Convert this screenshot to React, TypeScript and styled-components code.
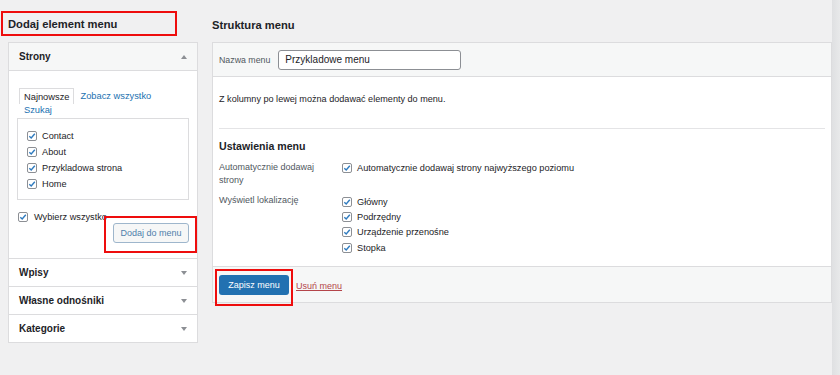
import React from 'react'
import styled, { createGlobalStyle } from 'styled-components'

const GlobalStyle = createGlobalStyle`
  html, body {
    margin: 0;
    padding: 0;
    background: #f0f0f1;
    font-family: "Liberation Sans", Arial, sans-serif;
    color: #1d2327;
  }
  * { box-sizing: border-box; }
`

const Root = styled.div`
  display: flex;
  width: 840px;
  height: 375px;
  overflow: hidden;
`
const Page = styled.div`
  flex: 1;
  display: grid;
  grid-template-columns: 190px 620px;
  column-gap: 14px;
  align-items: start;
  padding: 11px 0 0 8px;
`
const ScrollStrip = styled.div`
  width: 8px;
  background: linear-gradient(90deg, #dfe0e2, #e8e9ea);
`
const Column = styled.div`
  display: flex;
  flex-direction: column;
`
const Marked = styled.div`
  border: 2px solid #ee0d0d;
  position: relative;
  z-index: 1;
`
const LeftTitle = styled(Marked)`
  margin-left: -7px;
  width: 176px;
  height: 25px;
  padding-left: 5px;
  display: flex;
  align-items: center;
  font-size: 11.2px;
  font-weight: 700;
  margin-bottom: 6px;
`
const RightTitle = styled.h2`
  margin: 0 0 6px;
  height: 25px;
  padding-top: 8px;
  font-size: 11.2px;
  font-weight: 700;
`
const Accordion = styled.div`
  background: #fff;
  border: 1px solid #dcdcde;
`
const SectionHead = styled.div<{ $open?: boolean }>`
  height: 28px;
  display: flex;
  align-items: center;
  justify-content: space-between;
  padding: 0 10px 0 10px;
  font-size: 10px;
  font-weight: 700;
  background: ${p => (p.$open ? '#f6f7f7' : '#fff')};
  border-bottom: ${p => (p.$open ? '1px solid #dcdcde' : 'none')};
`
const Closed = styled(SectionHead)`
  border-top: 1px solid #dcdcde;
`
const Arrow = styled.span<{ $up?: boolean }>`
  width: 0;
  height: 0;
  border-left: 3px solid transparent;
  border-right: 3px solid transparent;
  ${p => (p.$up ? 'border-bottom: 4px solid #8c8f94;' : 'border-top: 4px solid #8c8f94;')}
`
const SectionBody = styled.div`
  padding: 17px 8px 3px 8px;
  display: flex;
  flex-direction: column;
`
const TabRow = styled.div`
  display: flex;
  align-items: flex-start;
  margin-left: 2px;
  font-size: 9.3px;
`
const ActiveTab = styled.span`
  border: 1px solid #dcdcde;
  border-bottom: none;
  padding: 3px 4px 4px;
  height: 16px;
  color: #1d2327;
`
const TabLink = styled.span`
  color: #2271b1;
  padding: 3px 5px 0 6px;
`
const TabLinkWrapped = styled(TabLink)`
  display: block;
  padding: 0 0 0 5px;
  margin-left: 2px;
  line-height: 12px;
  font-size: 9.3px;
`
const ListBox = styled.div`
  margin-top: 2px;
  border: 1px solid #dcdcde;
  padding: 9px 0 7px 9px;
`
const CheckRow = styled.label<{ $h?: number }>`
  display: flex;
  align-items: center;
  gap: 5px;
  height: ${p => p.$h ?? 16}px;
  font-size: 9.2px;
  color: #1d2327;
`
const SelectAll = styled(CheckRow)`
  margin-top: 9px;
  padding-left: 1px;
  gap: 6px;
  white-space: nowrap;
`
const AddFrame = styled(Marked)`
  align-self: flex-end;
  margin: -9px -8px 2px 0;
  padding: 5px 6px 8px 7px;
`
const GhostButton = styled.button`
  display: block;
  width: 76px;
  height: 20px;
  border: 1px solid #9eb6cc;
  border-radius: 3px;
  background: #f6f7f7;
  color: #4f80ab;
  font-family: inherit;
  font-size: 9px;
  padding: 0;
`
const Box = styled.span`
  width: 10px;
  height: 10px;
  flex: none;
  border: 1px solid #8c8f94;
  border-radius: 2px;
  background: #fff;
  display: inline-flex;
  align-items: center;
  justify-content: center;
`
const Panel = styled.div`
  border: 1px solid #dcdcde;
  background: #fff;
`
const PanelHead = styled.div`
  height: 34px;
  background: #f6f7f7;
  border-bottom: 1px solid #dcdcde;
  display: flex;
  align-items: center;
  gap: 8px;
  padding-left: 6px;
  font-size: 8.8px;
  color: #50575e;
`
const NameInput = styled.div`
  width: 183px;
  height: 20px;
  border: 1px solid #8c8f94;
  border-radius: 3px;
  background: #fff;
  display: flex;
  align-items: center;
  padding-left: 6px;
  font-size: 10px;
  color: #1d2327;
`
const PanelBody = styled.div`
  padding: 15px 6px 10px;
`
const Hint = styled.p`
  margin: 0 0 22px;
  line-height: 14px;
  font-size: 9.1px;
`
const Settings = styled.div`
  border-top: 1px solid #e4e4e6;
  padding-top: 9px;
`
const SettingsTitle = styled.h3`
  margin: 0 0 7px;
  font-size: 10.6px;
  line-height: 16px;
  font-weight: 700;
`
const SettingRow = styled.div`
  display: grid;
  grid-template-columns: 123px 1fr;
  & + & { margin-top: 7px; }
`
const SettingLabel = styled.div`
  width: 118px;
  font-size: 9px;
  line-height: 13px;
  color: #50575e;
`
const Options = styled.div`
  display: flex;
  flex-direction: column;
`
const PanelFoot = styled.div`
  height: 36px;
  background: #f6f7f7;
  border-top: 1px solid #dcdcde;
  display: flex;
  align-items: flex-start;
  padding: 2px 0 0 2px;
`
const SaveFrame = styled(Marked)`
  padding: 4px 2px 9px;
`
const PrimaryButton = styled.button`
  display: block;
  width: 70px;
  height: 20px;
  border: none;
  border-radius: 3px;
  background: #2271b1;
  color: #fff;
  font-family: inherit;
  font-size: 9px;
  padding: 0;
`
const DeleteLink = styled.span`
  margin: 12px 0 0 3px;
  font-size: 9px;
  color: #b4454a;
  text-decoration: underline;
`

const Check = () => (
  <Box>
    <svg width="8" height="8" viewBox="0 0 8 8">
      <polyline points="1.3,4.2 3.2,6 6.8,1.8" fill="none" stroke="#2f7bbf" strokeWidth="1.4" />
    </svg>
  </Box>
)

const pages = ['Contact', 'About', 'Przykladowa strona', 'Home']
const closedSections = ['Wpisy', 'Własne odnośniki', 'Kategorie']
const locations = ['Główny', 'Podrzędny', 'Urządzenie przenośne', 'Stopka']

export default function App() {
  return (
    <Root>
      <GlobalStyle />
      <Page>
        <Column>
          <LeftTitle>Dodaj element menu</LeftTitle>
          <Accordion>
            <SectionHead $open>
              Strony
              <Arrow $up />
            </SectionHead>
            <SectionBody>
              <TabRow>
                <ActiveTab>Najnowsze</ActiveTab>
                <TabLink>Zobacz wszystko</TabLink>
              </TabRow>
              <TabLinkWrapped>Szukaj</TabLinkWrapped>
              <ListBox>
                {pages.map(p => (
                  <CheckRow key={p}>
                    <Check />
                    {p}
                  </CheckRow>
                ))}
              </ListBox>
              <SelectAll>
                <Check />
                Wybierz wszystko
              </SelectAll>
              <AddFrame>
                <GhostButton>Dodaj do menu</GhostButton>
              </AddFrame>
            </SectionBody>
            {closedSections.map(s => (
              <Closed key={s}>
                {s}
                <Arrow />
              </Closed>
            ))}
          </Accordion>
        </Column>
        <Column>
          <RightTitle>Struktura menu</RightTitle>
          <Panel>
            <PanelHead>
              Nazwa menu
              <NameInput>Przykladowe menu</NameInput>
            </PanelHead>
            <PanelBody>
              <Hint>Z kolumny po lewej można dodawać elementy do menu.</Hint>
              <Settings>
                <SettingsTitle>Ustawienia menu</SettingsTitle>
                <SettingRow>
                  <SettingLabel>Automatycznie dodawaj strony</SettingLabel>
                  <Options>
                    <CheckRow $h={13}>
                      <Check />
                      Automatycznie dodawaj strony najwyższego poziomu
                    </CheckRow>
                  </Options>
                </SettingRow>
                <SettingRow>
                  <SettingLabel>Wyświetl lokalizację</SettingLabel>
                  <Options>
                    {locations.map(l => (
                      <CheckRow key={l} $h={15.4}>
                        <Check />
                        {l}
                      </CheckRow>
                    ))}
                  </Options>
                </SettingRow>
              </Settings>
            </PanelBody>
            <PanelFoot>
              <SaveFrame>
                <PrimaryButton>Zapisz menu</PrimaryButton>
              </SaveFrame>
              <DeleteLink>Usuń menu</DeleteLink>
            </PanelFoot>
          </Panel>
        </Column>
      </Page>
      <ScrollStrip />
    </Root>
  )
}
